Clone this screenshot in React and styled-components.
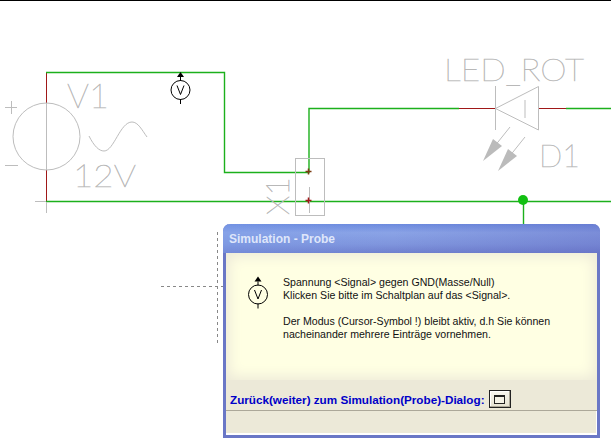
import React from 'react';
import styled, { createGlobalStyle } from 'styled-components';

const GlobalStyle = createGlobalStyle`
  html, body {
    margin: 0;
    padding: 0;
    background: #fff;
    overflow: hidden;
    font-family: "Liberation Sans", Arial, sans-serif;
  }
`;

const Page = styled.div`
  position: relative;
  width: 611px;
  height: 446px;
  overflow: hidden;
  background: #fff;
  border-top: 1px solid #000;
  box-sizing: border-box;
`;

const Schematic = styled.svg`
  display: block;
  width: 611px;
  height: 445px;
`;

const Dialog = styled.div`
  position: absolute;
  left: 223px;
  top: 223px;
  width: 377px;
  height: 214px;
  box-sizing: border-box;
  display: flex;
  flex-direction: column;
  border: 3px solid #6a77c6;
  border-top: none;
  border-radius: 7px 7px 0 0;
  background: #ece9d8;
`;

const TitleBar = styled.div`
  height: 29px;
  margin: 0 -3px;
  padding: 0 0 0 6px;
  display: flex;
  align-items: center;
  flex-shrink: 0;
  border-radius: 7px 7px 0 0;
  background:
    linear-gradient(90deg, rgba(125, 160, 235, 0.35) 0%, rgba(125, 160, 235, 0) 45%, rgba(95, 100, 190, 0.35) 100%),
    linear-gradient(180deg, #6c8ade 0%, #8aa3e6 30%, #7f95dd 70%, #6f7fce 100%);
  color: #dfe6fa;
  font-size: 12px;
  font-weight: bold;
`;

const Body = styled.div`
  flex: 1;
  min-height: 0;
  background: #ece9d8;
`;

const Notice = styled.div`
  height: 127px;
  box-sizing: border-box;
  padding: 23px 0 0 20px;
  display: flex;
  align-items: flex-start;
  gap: 13px;
  background: #ffffe3;
  box-shadow: inset 0 0 14px 3px #ece9d8;
`;

const ProbeIcon = styled.svg`
  width: 24px;
  height: 34px;
  flex-shrink: 0;
`;

const Message = styled.div`
  font-size: 10.6px;
  line-height: 13px;
  color: #111;
`;

const Paragraph = styled.p`
  margin: 0 0 13px;
`;

const FooterRow = styled.div`
  height: 31px;
  box-sizing: border-box;
  padding: 8px 0 0 4px;
  display: flex;
  align-items: center;
  gap: 4px;
  border-bottom: 1px solid #aca899;
`;

const BackLabel = styled.span`
  color: #0000c8;
  font-size: 11.7px;
  font-weight: bold;
`;

const SquareButton = styled.button`
  width: 22px;
  height: 18px;
  padding: 0;
  display: flex;
  align-items: center;
  justify-content: center;
  background: linear-gradient(180deg, #f8f7f0 0%, #e4e1d0 100%);
  border: 1px solid #222;
  box-shadow: inset -1px -1px 0 #aca899, inset 1px 1px 0 #fff;
`;

const ButtonGlyph = styled.span`
  width: 11px;
  height: 9px;
  box-sizing: border-box;
  border: 1px solid #222;
  border-top-width: 2px;
  background: #f4f2e6;
`;

const StatusBar = styled.div`
  height: 24px;
  background: #ece9d8;
  border-bottom: 2px solid #fff;
  border-right: 1px solid #fff;
  box-sizing: border-box;
`;

const CadText = styled.text`
  font-family: Lato, Inter, "Liberation Sans", sans-serif;
  font-weight: 100;
  fill: #b4b4b4;
  stroke: #b8b8b8;
  stroke-width: 0.5px;
`;

const GREEN = '#1cb01c';
const RED = '#a01818';
const GRAY = '#bdbdbd';

// thin CAD style label of the schematic
const Label = ({ x, y, size, width, children, transform }) => (
  <CadText
    x={x}
    y={y}
    fontSize={size}
    textLength={width}
    lengthAdjust="spacingAndGlyphs"
    transform={transform}
  >
    {children}
  </CadText>
);

const Probe = () => (
  <g fill="none" stroke="#000" strokeWidth="1">
    <path d="M12 5V9M12 27V32" />
    <path d="M12 0L15.5 5H8.5Z" fill="#000" stroke="none" />
    <circle cx="12" cy="18" r="9.5" />
    <path d="M8.5 13.5L12 22.5L15.5 13.5" />
  </g>
);

export default function App() {
  return (
    <Page>
      <GlobalStyle />
      <Schematic viewBox="0 1 611 445">
        {/* wires */}
        <g fill="none" stroke={RED} strokeWidth="1">
          <path d="M46.5 72V103M46.5 170V201" />
          <path d="M459 108.5H495M538 108.5H566" />
        </g>
        <g fill="none" stroke={GREEN} strokeWidth="1.4">
          <path d="M46 72.5H224.5V172.5H309V108.5H459M566 108.5H611" />
          <path d="M46 201.5H611" />
          <path d="M523.5 201V225" />
        </g>

        {/* source */}
        <g fill="none" stroke={GRAY} strokeWidth="1">
          <circle cx="46.5" cy="136.5" r="33.5" />
          <path d="M46.5 103V170" />
          <path d="M5 107.5H17M11.5 101V114" />
          <path d="M5 165.5H18" />
          <path d="M35 201.5H46M46.5 202V213" />
          <path d="M89 136C94 146 99 151 104 151C114 151 120 122 132 122C138 122 142 130 147 137" />
        </g>
        <Label x={67} y={108} size={34} width={42}>V1</Label>
        <Label x={73} y={187} size={32} width={63}>12V</Label>

        {/* probe on the wire */}
        <g transform="translate(168.5 72)">
          <Probe />
        </g>

        {/* connector X1 */}
        <g fill="none" stroke={GRAY} strokeWidth="1">
          <rect x="295.5" y="158.5" width="29" height="57" />
          <path d="M309.5 187V213" />
        </g>
        <Label x={0} y={0} size={32} width={38} transform="translate(289 215) rotate(-90)">X1</Label>
        <path d="M305.5 171.5H311.5M308.5 168.5V174.5" stroke="#7a3a10" strokeWidth="1.5" />
        <path d="M305.5 200.5H311.5M308.5 197.5V203.5" stroke={RED} strokeWidth="1.5" />

        {/* LED */}
        <g fill="none" stroke={GRAY} strokeWidth="1">
          <path d="M495.5 86V130" />
          <path d="M495.5 108.5L538.5 86.5V130Z" />
          <path d="M525 100V118" />
          <path d="M510 127L490 152M525 137L505 162" />
        </g>
        <path d="M483 161L493 139L502 146Z" fill="#bbb" />
        <path d="M498 171L508 149L517 156Z" fill="#bbb" />
        <Label x={444} y={81} size={32} width={140}>LED_ROT</Label>
        <Label x={539} y={167} size={32} width={41}>D1</Label>

        {/* node + marker */}
        <circle cx="523" cy="200" r="5" fill="#12c012" />

        {/* dashed guides */}
        <path d="M161 286.5H223M217.5 232V344" fill="none" stroke="#888" strokeWidth="1" strokeDasharray="3 3" />
      </Schematic>

      <Dialog>
        <TitleBar>Simulation - Probe</TitleBar>
        <Body>
          <Notice>
            <ProbeIcon viewBox="0 0 24 33">
              <Probe />
            </ProbeIcon>
            <Message>
              <Paragraph>
                Spannung &lt;Signal&gt; gegen GND(Masse/Null)
                <br />
                Klicken Sie bitte im Schaltplan auf das &lt;Signal&gt;.
              </Paragraph>
              <Paragraph>
                Der Modus (Cursor-Symbol !) bleibt aktiv, d.h Sie können
                <br />
                nacheinander mehrere Einträge vornehmen.
              </Paragraph>
            </Message>
          </Notice>
          <FooterRow>
            <BackLabel>Zurück(weiter) zum Simulation(Probe)-Dialog:</BackLabel>
            <SquareButton>
              <ButtonGlyph />
            </SquareButton>
          </FooterRow>
          <StatusBar />
        </Body>
      </Dialog>
    </Page>
  );
}
